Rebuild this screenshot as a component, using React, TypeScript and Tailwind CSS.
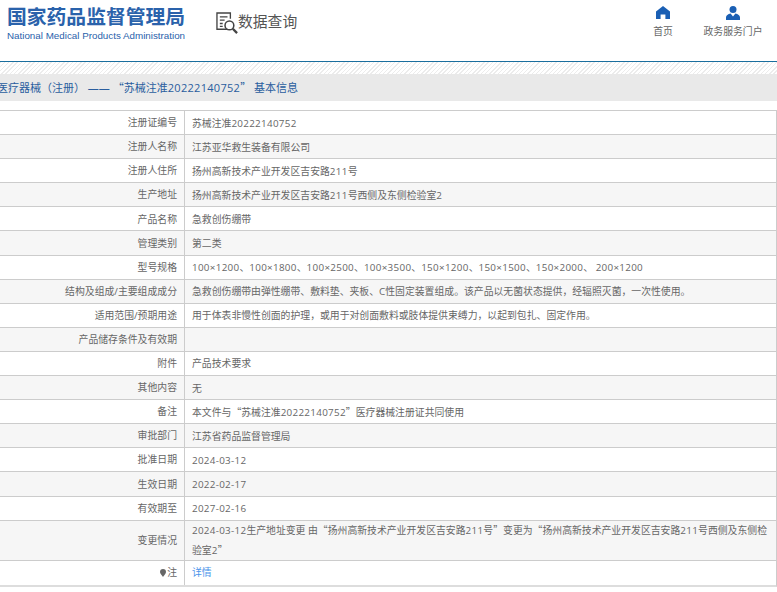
import React from 'react';

const rows: [string, string][] = [
  ['注册证编号', '苏械注准20222140752'],
  ['注册人名称', '江苏亚华救生装备有限公司'],
  ['注册人住所', '扬州高新技术产业开发区吉安路211号'],
  ['生产地址', '扬州高新技术产业开发区吉安路211号西侧及东侧检验室2'],
  ['产品名称', '急救创伤绷带'],
  ['管理类别', '第二类'],
  ['型号规格', '100×1200、100×1800、100×2500、100×3500、150×1200、150×1500、150×2000、 200×1200'],
  ['结构及组成/主要组成成分', '急救创伤绷带由弹性绷带、敷料垫、夹板、C性固定装置组成。该产品以无菌状态提供，经辐照灭菌，一次性使用。'],
  ['适用范围/预期用途', '用于体表非慢性创面的护理，或用于对创面敷料或肢体提供束缚力，以起到包扎、固定作用。'],
  ['产品储存条件及有效期', ''],
  ['附件', '产品技术要求'],
  ['其他内容', '无'],
  ['备注', '本文件与“苏械注准20222140752”医疗器械注册证共同使用'],
  ['审批部门', '江苏省药品监督管理局'],
  ['批准日期', '2024-03-12'],
  ['生效日期', '2022-02-17'],
  ['有效期至', '2027-02-16'],
];

const font = "font-['Open_Sans','Noto_Sans_CJK_SC',sans-serif]";

// digits in the reference run a bit wider than Open Sans, quotes are full width
const T = ({ s }: { s: string }) => (
  <>
    {s.split(/([0-9×\-]+|[“”])/).map((part, i) => {
      if (part === '“' || part === '”') return <span key={i} className="font-['Noto_Sans_CJK_SC',sans-serif]">{part}</span>;
      if (/^[0-9×\-]+$/.test(part)) return <span key={i} className="tracking-[0.3px]">{part}</span>;
      return <span key={i}>{part}</span>;
    })}
  </>
);

const Row = ({ label, value, shaded, className }: { label: string; value: string; shaded: boolean; className: string }) => (
  <div className={`flex border-b border-[#ccc] ${className} ${shaded ? 'bg-[#f6f6f6]' : 'bg-white'}`}>
    <div className="w-[185px] shrink-0 flex items-center justify-end pr-[7px] border-r border-[#ccc]">{label}</div>
    <div className="flex-1 pl-[7px] pr-2 self-center leading-[20px]"><T s={value} /></div>
  </div>
);

const HomeIcon = () => (
  <svg width="14" height="13" viewBox="0 0 14 13" className="text-[#1a5fb4]">
    <path fill="currentColor" d="M7 0 14 5.6V13H9.4V8.6H4.6V13H0V5.6Z" />
  </svg>
);

const UserIcon = () => (
  <svg width="14" height="14" viewBox="0 0 14 14" className="text-[#1a5fb4]">
    <circle cx="7" cy="3.5" r="3.5" fill="currentColor" />
    <path fill="currentColor" d="M0 14V11.5C0 9.5 2 8.2 4.6 7.6L7 10.4 9.4 7.6C12 8.2 14 9.5 14 11.5V14Z" />
  </svg>
);

const SearchDocIcon = () => (
  <svg width="23" height="24" viewBox="0 0 24 25" fill="none" stroke="#444">
    <path strokeWidth="1.4" d="M12 18H1V1H15V7" />
    <path strokeWidth="1.4" d="M4 5H12M4 8.5H9M4 12H7M4 15H7" />
    <circle cx="14" cy="14" r="4.6" strokeWidth="1.6" />
    <path strokeWidth="2.4" d="M17.5 17.5 22 22" />
  </svg>
);

const PinIcon = () => (
  <svg width="6" height="8" viewBox="0 0 6 8" className="mr-[1px]">
    <path fill="#666" d="M3 0A3 3 0 0 1 6 3C6 4.6 4 6.4 3 8 2 6.4 0 4.6 0 3A3 3 0 0 1 3 0Z" />
  </svg>
);

export default function App() {
  return (
    <div className={`w-[777px] h-[592px] overflow-hidden bg-white text-[9.85px] text-[#666] [text-spacing-trim:space-all] ${font}`}>
      <header className="h-[62px] flex border-b border-[#1a6e9e]">
        <div className="ml-[7px] w-[178px] pt-[5px]">
          <div className="text-[19.8px] leading-[22px] font-bold text-[#2a62ab] whitespace-nowrap font-['Noto_Sans_CJK_SC',sans-serif]">国家药品监督管理局</div>
          <div className="mt-[2px] text-[9.8px] leading-[14px] text-[#2a62ab] whitespace-nowrap font-['Liberation_Sans',sans-serif]">National Medical Products Administration</div>
        </div>
        <div className="ml-[31px] pt-[12px] flex items-start">
          <SearchDocIcon />
          <span className="-mt-[1px] -ml-[1px] text-[14.8px] leading-[20px] text-[#555] font-['Noto_Sans_CJK_SC',sans-serif]">数据查询</span>
        </div>
        <nav className="ml-auto flex">
          <div className="w-[50px] flex flex-col items-center pt-[6px] gap-[5px]">
            <HomeIcon />
            <span className="leading-[14px]">首页</span>
          </div>
          <div className="ml-[15px] mr-[14px] w-[60px] flex flex-col items-center pt-[6px] gap-[4px]">
            <UserIcon />
            <span className="leading-[14px] whitespace-nowrap">政务服务门户</span>
          </div>
        </nav>
      </header>
      <div className="h-[12px] bg-[repeating-linear-gradient(135deg,#ececec_0,#ececec_1px,#ffffff_1px,#ffffff_3px)]" />
      <div className="h-[27px] bg-[#e9e9e9] flex items-center whitespace-nowrap text-[11px] text-[#2a5d9e]">
        <span className="-ml-[3px]"><T s="医疗器械（注册） —— “苏械注准20222140752” 基本信息" /></span>
      </div>
      <div className="mt-[9px] border-t border-r border-[#ccc] border-b-2 border-b-[#ddd]">
        {rows.map(([label, value], i) => (
          <Row key={i} label={label} value={value} shaded={i % 2 === 1} className="h-[24.1px]" />
        ))}
        <Row
          label="变更情况"
          shaded
          className="h-[40px]"
          value="2024-03-12生产地址变更 由“扬州高新技术产业开发区吉安路211号”变更为“扬州高新技术产业开发区吉安路211号西侧及东侧检验室2”"
        />
        <div className="flex h-[24px] bg-white">
          <div className="w-[185px] shrink-0 flex items-center justify-end pr-[7px] border-r border-[#ccc]">
            <PinIcon />注
          </div>
          <div className="flex-1 flex items-center pl-[7px] text-[#4a94ea]">详情</div>
        </div>
      </div>
    </div>
  );
}
